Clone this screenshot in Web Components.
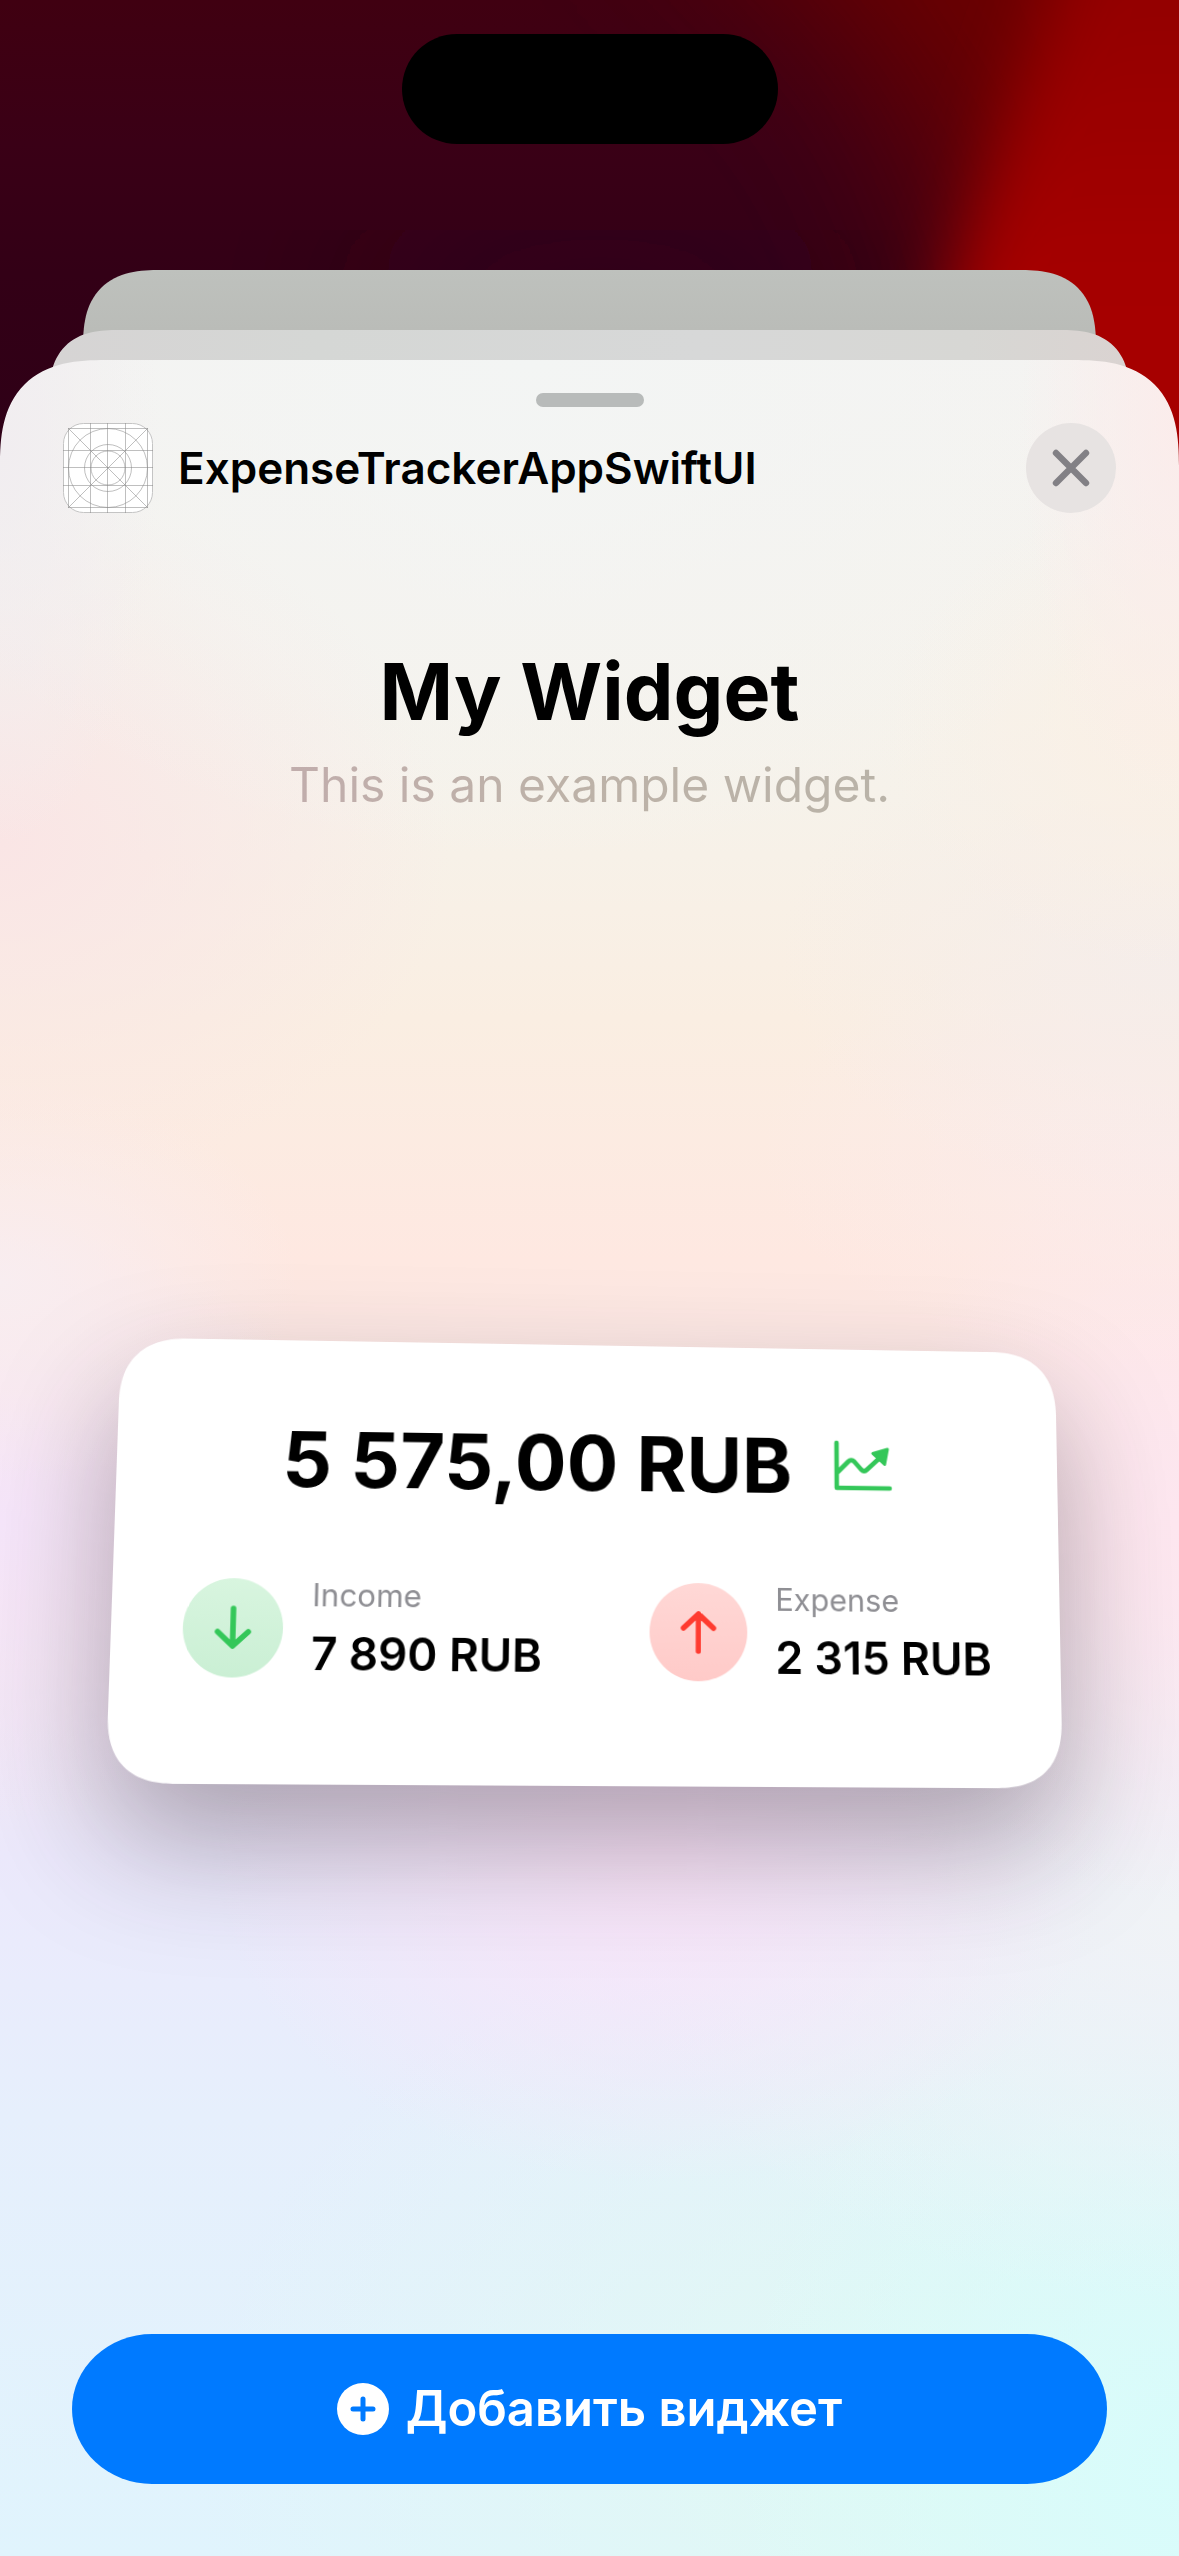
<!DOCTYPE html>
<html lang="ru">
<head>
<meta charset="utf-8">
<meta name="viewport" content="width=device-width">
<title>Widget gallery</title>
<style>
html,body{margin:0;height:100%}
body{font-family:Inter,"Liberation Sans",sans-serif;color:#000;background:#300018}
</style>
</head>
<body>
<widget-gallery>
  <app-header slot="header" name="ExpenseTrackerAppSwiftUI"></app-header>
  <widget-intro slot="intro">
    <span slot="title">My Widget</span>
    <span slot="description">This is an example widget.</span>
  </widget-intro>
  <balance-card slot="preview" amount="5 575,00 RUB">
    <money-entry kind="income" label="Income" value="7 890 RUB"></money-entry>
    <money-entry kind="expense" label="Expense" value="2 315 RUB"></money-entry>
  </balance-card>
  <add-button slot="action">Добавить виджет</add-button>
</widget-gallery>
<script>
class Base extends HTMLElement {
  connectedCallback() {
    if (this.shadowRoot) return;
    this.attachShadow({ mode: 'open' }).innerHTML = this.render();
  }
  attr(n) { return this.getAttribute(n) || ''; }
}

customElements.define('widget-gallery', class extends Base {
  render() {
    return `<style>
:host{display:flex;flex-direction:column;align-items:center;min-height:100vh;box-sizing:border-box;padding-top:34px;
  position:relative;overflow:hidden;isolation:isolate}
.wall{position:absolute;inset:0 0 auto 0;width:100%;height:720px;z-index:-1}
.island{width:376px;height:110px;border-radius:55px;background:#000;flex:none}
.back,.mid,.sheet{box-sizing:border-box;corner-shape:superellipse(1.4)}
.back{margin-top:126px;width:calc(100% - 166px);height:150px;border-radius:78px 78px 0 0;background:linear-gradient(#bec1bd,#babcb8 60px)}
.mid{margin-top:-90px;width:calc(100% - 98px);height:130px;border-radius:70px 70px 0 0;background:linear-gradient(90deg,#d6d4d4,#d5d7d5 25%,#d7d8d8 60%,#d7d7d4 85%,#dad3d1)}
.sheet{margin-top:-100px;width:100%;flex:1;display:flex;flex-direction:column;align-items:center;border-radius:106px 106px 0 0;padding:33px 63px 72px;
  background:
   radial-gradient(ellipse 160px 400px at 100% 3%,#fbeceb,#fbeceb00),
   radial-gradient(ellipse 160px 400px at 0 4%,#f1edf0,#f1edf000),
   radial-gradient(ellipse 700px 500px at 45% 0,#f3f5f4,#f3f5f400),
   radial-gradient(ellipse 300px 240px at 100% 17%,#faf0e5,#faf0e500),
   radial-gradient(ellipse 450px 350px at 0 22%,#fae5e5,#fae5e500),
   radial-gradient(ellipse 400px 250px at 100% 27%,#f5edea,#f5edea00),
   radial-gradient(ellipse 420px 220px at 100% 36%,#fbebea,#fbebea00),
   radial-gradient(ellipse 300px 200px at 0 42%,#f8edf0,#f8edf000),
   radial-gradient(ellipse 360px 300px at 0 53%,#f6e6fb,#f6e6fb00),
   radial-gradient(ellipse 450px 330px at 56% 68%,#fae5f9,#fae5f900),
   radial-gradient(ellipse 300px 380px at 100% 53%,#fee7f0,#fee7f000),
   radial-gradient(ellipse 560px 380px at 100% 71%,#f0f3f6,#f0f3f600),
   radial-gradient(ellipse 460px 520px at 100% 96%,#d8fcfb,#d8fcfb00),
   radial-gradient(ellipse 750px 560px at 80% 95%,#e0f9f3,#e0f9f300),
   linear-gradient(#f4f3f1,#f6f2ea 20%,#faeee2 30%,#fee8e1 41%,#f9e8ee 55%,#ece9fc 68%,#e6effc 80%,#e0f4fd)}
.grab{width:108px;height:14px;border-radius:7px;background:#b8bbba;flex:none}
slot{display:block}
.head{align-self:stretch;margin-top:16px}
.intro{margin-top:128px}
.preview{align-self:stretch;margin:527px 51px 0 56px}
.action{align-self:stretch;margin:auto 9px 0}
</style>
<svg class="wall" viewBox="0 0 1179 720" preserveAspectRatio="none" aria-hidden="true">
<defs><linearGradient id="g" x1="0" y1="0" x2="0" y2="1"><stop offset="0" stop-color="#400011"/><stop offset=".2" stop-color="#3a0016"/><stop offset=".38" stop-color="#330016"/><stop offset="1" stop-color="#280018"/></linearGradient>
<linearGradient id="r" x1="0" y1="0" x2="0" y2="1"><stop offset=".1" stop-color="#8e0000"/><stop offset=".45" stop-color="#a60000"/></linearGradient>
<filter id="b" x="-50%" y="-50%" width="200%" height="200%"><feGaussianBlur stdDeviation="34"/></filter>
<filter id="c" x="-50%" y="-50%" width="200%" height="200%"><feGaussianBlur stdDeviation="90"/></filter></defs>
<rect width="1179" height="720" fill="url(#g)"/>
<path d="M680-200 1400-200V500H1000Q1000 60 680-120Z" fill="#6c0000" filter="url(#c)"/>
<ellipse cx="600" cy="310" rx="240" ry="40" fill="#2a0022" filter="url(#c)"/>
<path d="M1090-200 1400-200V900H900L950 290Q1005 130 1050 0Z" fill="url(#r)" filter="url(#b)"/>
</svg>
<div class="island"></div><div class="back"></div><div class="mid"></div>
<main class="sheet"><div class="grab"></div>
<slot class="head" name="header"></slot>
<slot class="intro" name="intro"></slot>
<slot class="preview" name="preview"></slot>
<slot class="action" name="action"></slot></main>`;
  }
});

customElements.define('app-header', class extends Base {
  render() {
    return `<style>
:host{display:flex;align-items:center;gap:25px}
svg{display:block;flex:none}
.name{flex:1;font-size:44px;line-height:52px;font-weight:600}
button{width:90px;height:90px;border:0;padding:0;border-radius:50%;background:#e7e3e2;display:grid;place-items:center}
</style>
<svg width="90" height="90" viewBox="0 0 90 90" aria-hidden="true"><rect x=".5" y=".5" width="89" height="89" rx="20" fill="#fff" stroke="#c4c4c4"/>
<g fill="none" stroke="#8a8a8a" stroke-opacity=".55"><path d="M0 27.5H90M0 44.5H90M0 62.5H90M5 5.5H85M5 84.5H85M27.5 0V90M44.5 0V90M62.5 0V90M5.5 5V85M84.5 5V85M6 6 84 84M84 6 6 84"/><circle cx="45" cy="45" r="39.5"/><circle cx="45" cy="45" r="23.5"/><circle cx="45" cy="45" r="17"/></g></svg>
<span class="name">${this.attr('name')}</span>
<button type="button" aria-label="Close"><svg width="38" height="38" viewBox="0 0 38 38" fill="none" stroke="#828085" stroke-width="6.4" stroke-linecap="round"><path d="M4 4 34 34M34 4 4 34"/></svg></button>`;
  }
});

customElements.define('widget-intro', class extends Base {
  render() {
    return `<style>
:host{display:flex;flex-direction:column;align-items:center;text-align:center}
h1{margin:0;font-size:79px;line-height:100px;font-weight:700}
p{margin:0;font-size:48px;line-height:60px;margin-top:14px;background:linear-gradient(90deg,#c1adac,#bdb2a8 45%,#b9b3a8);-webkit-background-clip:text;background-clip:text;color:transparent}
</style><h1><slot name="title"></slot></h1><p><slot name="description"></slot></p>`;
  }
});

customElements.define('balance-card', class extends Base {
  render() {
    return `<style>
:host{display:block}
.card{box-sizing:border-box;height:442px;border-radius:68px;corner-shape:superellipse(1.3);background:#fff;padding:74px 70px 0 70px;
 transform:perspective(1430px) rotateX(4.6deg) rotateY(2.2deg) rotateZ(.46deg);
 box-shadow:0 54px 120px rgba(50,35,50,.37)}
.total{display:flex;align-items:center;justify-content:center;gap:42px;font-size:77px;line-height:92px;font-weight:700;padding-right:6px}
.total svg{margin-bottom:2px}
.row{display:flex;justify-content:space-between;margin-top:70px}
</style>
<section class="card"><div class="total"><span>${this.attr('amount')}</span>
<svg width="60" height="52" viewBox="0 0 60 52" fill="none" stroke="#34c759" stroke-width="4.6" stroke-linecap="round" stroke-linejoin="round" aria-hidden="true"><path d="M3 3V49H57M4 33 15 22Q18 19 21 22L28 30Q31 33 34 30L48 17"/><path d="M40 13.500 55 9 52 24.500Z" fill="#34c759" stroke-width="3"/></svg></div>
<div class="row"><slot></slot></div></section>`;
  }
});

customElements.define('money-entry', class extends Base {
  render() {
    const up = this.attr('kind') === 'expense';
    return `<style>
:host{display:flex;align-items:center;gap:28px}
.dot{width:98px;height:98px;border-radius:50%;display:grid;place-items:center;background:${up ? 'linear-gradient(#ffd8d6,#ffcac8)' : 'linear-gradient(#d8f5df,#caefd4)'}}
.text{display:flex;flex-direction:column}
.label{font-size:31px;line-height:40px;color:#8e8e93}
.value{font-size:45px;line-height:56px;font-weight:600;margin-top:10px}
</style>
<span class="dot"><svg width="36" height="44" viewBox="0 0 36 44" fill="none" stroke="${up ? '#ff3b30' : '#34c759'}" stroke-width="5.500" stroke-linecap="round" stroke-linejoin="round" aria-hidden="true"><path d="${up ? 'M18 41V4M3 18 18 4 33 18' : 'M18 3V40M3 26 18 40 33 26'}"/></svg></span>
<span class="text"><span class="label">${this.attr('label')}</span><span class="value">${this.attr('value')}</span></span>`;
  }
});

customElements.define('add-button', class extends Base {
  render() {
    return `<style>
:host{display:block}
button{width:100%;height:150px;border:0;padding:0;border-radius:80px/75px;background:#007aff;color:#fff;display:flex;align-items:center;justify-content:center;gap:17px;font:600 49px/60px Inter,"Liberation Sans",sans-serif}
svg{display:block}
</style>
<button type="button"><svg width="52" height="52" viewBox="0 0 52 52" aria-hidden="true"><circle cx="26" cy="26" r="26" fill="#fff"/><path d="M26 16V36M16 26H36" stroke="#007aff" stroke-width="5" stroke-linecap="round"/></svg><slot></slot></button>`;
  }
});
</script>
</body>
</html>
